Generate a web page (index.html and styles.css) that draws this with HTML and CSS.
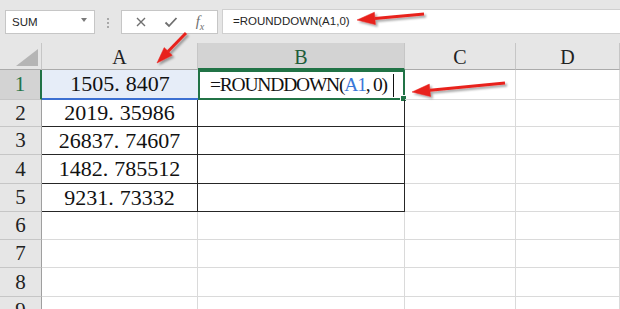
FILE: index.html
```html
<!DOCTYPE html>
<html lang="en">
  <head>
    <meta charset="UTF-8" />
    <meta name="viewport" content="width=device-width, initial-scale=1.0" />
    <title>ROUNDDOWN</title>
    <link rel="stylesheet" href="styles.css">
  </head>
  <body>
    <div class="app">
      <!-- formula bar -->
      <div class="formula-bar">
        <div class="name-box">
          <span>SUM</span>
          <span class="drop"></span>
        </div>
        <div class="grip"><i></i><i></i><i></i></div>
        <div class="fx-box">
          <svg class="icon" width="12" height="12" viewBox="0 0 12 12">
            <path d="M2 2 L10 10 M10 2 L2 10" stroke="#6f6f6f" stroke-width="1.4" fill="none" />
          </svg>
          <svg class="icon" width="14" height="12" viewBox="0 0 14 12">
            <path d="M1.5 6.5 L5 10 L12.5 2" stroke="#6f6f6f" stroke-width="1.8" fill="none" />
          </svg>
          <span class="fx">f<sub>x</sub></span>
        </div>
        <div class="formula-input">=ROUNDDOWN(A1,0)</div>
      </div>

      <!-- sheet -->
      <div class="sheet">
        <div class="corner"><span class="tri"></span></div>
        <div class="hd">A</div>
        <div class="hd hd-active">B</div>
        <div class="hd">C</div>
        <div class="hd">D</div>

        <div class="rh rh-active">1</div>
        <div class="cell num sel">1505<span class="dot">.</span>8407</div>
        <div class="cell active">=ROUNDDOWN(<span class="ref">A1</span>, 0)<span class="caret"></span><span class="handle"></span></div>
        <div class="cell"></div>
        <div class="cell"></div>

        <div class="rh">2</div>
        <div class="cell num bd">2019<span class="dot">.</span>35986</div>
        <div class="cell bd"></div>
        <div class="cell"></div>
        <div class="cell"></div>

        <div class="rh">3</div>
        <div class="cell num bd">26837<span class="dot">.</span>74607</div>
        <div class="cell bd"></div>
        <div class="cell"></div>
        <div class="cell"></div>

        <div class="rh">4</div>
        <div class="cell num bd">1482<span class="dot">.</span>785512</div>
        <div class="cell bd"></div>
        <div class="cell"></div>
        <div class="cell"></div>

        <div class="rh">5</div>
        <div class="cell num bd">9231<span class="dot">.</span>73332</div>
        <div class="cell bd"></div>
        <div class="cell"></div>
        <div class="cell"></div>

        <div class="rh">6</div>
        <div class="cell"></div>
        <div class="cell"></div>
        <div class="cell"></div>
        <div class="cell"></div>

        <div class="rh">7</div>
        <div class="cell"></div>
        <div class="cell"></div>
        <div class="cell"></div>
        <div class="cell"></div>

        <div class="rh">8</div>
        <div class="cell"></div>
        <div class="cell"></div>
        <div class="cell"></div>
        <div class="cell"></div>

        <div class="rh">9</div>
        <div class="cell"></div>
        <div class="cell"></div>
        <div class="cell"></div>
        <div class="cell"></div>
      </div>

      <!-- red arrows drawn over the screenshot -->
      <svg class="arrows" width="620" height="309" viewBox="0 0 620 309">
        <defs>
          <filter id="shadow" x="-20%" y="-50%" width="140%" height="200%">
            <feDropShadow dx="2" dy="2" stdDeviation="1.3" flood-color="#000" flood-opacity="0.35" />
          </filter>
        </defs>
        <g filter="url(#shadow)" fill="#e8231f" stroke="#e8231f">
          <line x1="186" y1="33" x2="168" y2="51.5" stroke-width="3" />
          <polygon points="157,63 172.2,55.3 164.2,47.6" stroke-width="0.5" />

          <line x1="424" y1="14" x2="375" y2="18.4" stroke-width="3" />
          <polygon points="357,20 375.4,24.6 374.4,12.2" stroke-width="0.5" />

          <line x1="505" y1="83" x2="430" y2="90.3" stroke-width="3" />
          <polygon points="412,92 430.6,96.5 429.3,84.1" stroke-width="0.5" />
        </g>
      </svg>
    </div>
  </body>
</html>
```

FILE: styles.css
```css
body {
  margin: 0;
  font-family: "Liberation Serif", serif;
  background-color: #ffffff;
}

.app {
  position: relative;
  width: 620px;
  height: 309px;
  overflow: hidden;
}

/* Formula bar */
.formula-bar {
  display: flex;
  align-items: flex-start;
  height: 43px;
  box-sizing: border-box;
  padding-top: 9px;
  background-color: #e6e6e6;
  font-family: "Liberation Sans", Arial, sans-serif;
  font-size: 11.5px;
  color: #262626;
}

.name-box {
  display: flex;
  align-items: center;
  justify-content: space-between;
  box-sizing: border-box;
  width: 90px;
  height: 24px;
  margin: 1px 0 0 5px;
  padding: 0 7px 0 6px;
  background-color: #ffffff;
  border: 1px solid #c6c6c6;
}

.drop {
  width: 0;
  height: 0;
  border-left: 3.5px solid transparent;
  border-right: 3.5px solid transparent;
  border-top: 4px solid #7a7a7a;
  margin-top: -4px;
}

.grip {
  display: flex;
  flex-direction: column;
  gap: 2px;
  margin: 9px 12px 0 12px;
}

.grip i {
  width: 2px;
  height: 2px;
  background-color: #a8a8a8;
}

.fx-box {
  display: flex;
  align-items: center;
  justify-content: space-around;
  box-sizing: border-box;
  width: 97px;
  height: 24px;
  margin-top: 1px;
  padding: 0 4px;
  background-color: #ffffff;
  border: 1px solid #c6c6c6;
}

.fx {
  font-family: "Liberation Serif", serif;
  font-style: italic;
  font-size: 15px;
  color: #6f6f6f;
}

.fx sub {
  font-size: 10px;
}

.formula-input {
  flex: 1;
  box-sizing: border-box;
  height: 25px;
  margin-left: 4px;
  padding: 5px 0 0 10px;
  background-color: #ffffff;
  border: 1px solid #d0d0d0;
  border-right: none;
}

/* Sheet grid */
.sheet {
  display: grid;
  grid-template-columns: 42px 156px 207px 111px 104px;
  grid-template-rows: 27px 30px 27px 28px 29px 28px 28px 28px 29px 28px;
}

.sheet > div {
  box-sizing: border-box;
}

.corner {
  position: relative;
  background-color: #e6e6e6;
  border-right: 1px solid #c6c6c6;
  border-bottom: 1px solid #ababab;
}

.tri {
  position: absolute;
  right: 3px;
  bottom: 3px;
  width: 0;
  height: 0;
  border-left: 22px solid transparent;
  border-bottom: 17px solid #b5b5b5;
}

.hd {
  display: flex;
  align-items: center;
  justify-content: center;
  padding-top: 3px;
  background-color: #e6e6e6;
  border-right: 1px solid #c6c6c6;
  border-bottom: 1px solid #ababab;
  font-size: 20px;
  color: #222222;
}

.hd-active {
  background-color: #d3d3d3;
  color: #1f5d3a;
  border-bottom: 2px solid #217346;
}

.rh {
  display: flex;
  align-items: center;
  justify-content: center;
  background-color: #e6e6e6;
  border-right: 1px solid #9f9f9f;
  border-bottom: 1px solid #c6c6c6;
  font-size: 21px;
  color: #222222;
}

.rh-active {
  background-color: #d3d3d3;
  color: #217346;
  border-right: 2px solid #217346;
}

.cell {
  position: relative;
  border-right: 1px solid #dadada;
  border-bottom: 1px solid #dadada;
  font-size: 20px;
  color: #111111;
}

.num {
  display: flex;
  align-items: center;
  justify-content: center;
  font-size: 22px;
}

.dot {
  margin-right: 6px;
}

.bd {
  border-right: 1px solid #262626;
  border-bottom: 1px solid #262626;
}

.sel {
  background-color: #e6edf8;
  border-right: none;
  border-bottom: 2px solid #3b6fd1;
}

.active {
  display: flex;
  align-items: center;
  padding-left: 10px;
  border: 2px solid #217346;
  font-size: 19.5px;
  letter-spacing: -1.2px;
}

.ref {
  color: #3b78d8;
}

.caret {
  width: 1px;
  height: 23px;
  margin-left: 6px;
  background-color: #111111;
}

.handle {
  position: absolute;
  right: -4px;
  bottom: -4px;
  width: 5px;
  height: 5px;
  background-color: #217346;
  border: 1px solid #ffffff;
}

.arrows {
  position: absolute;
  top: 0;
  left: 0;
  pointer-events: none;
}
```
